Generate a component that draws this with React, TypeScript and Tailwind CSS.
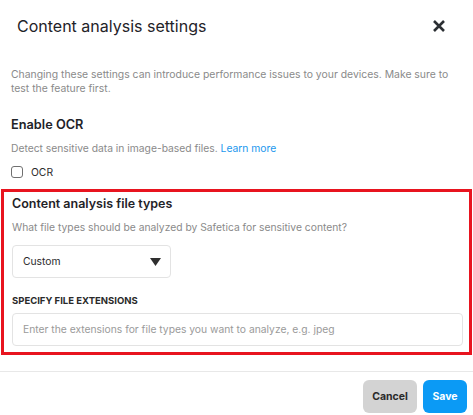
import React from "react";

export default function App() {
  return (
    <div className="w-[473px] h-[415px] bg-white overflow-hidden" style={{ fontFamily: "Inter, 'Noto Sans', sans-serif" }}>
      <div className="flex items-center justify-between h-[52px] pl-[17px] pr-[26px]">
        <h1 className="text-[16px] text-[#1f2328] font-normal leading-[24px]">Content analysis settings</h1>
        <svg width="14" height="14" viewBox="0 0 14 14" className="mr-[1px]">
          <path d="M2 2 L12 12 M12 2 L2 12" stroke="#2b2f33" strokeWidth="2.6" strokeLinecap="butt" />
        </svg>
      </div>
      <div className="px-[11px] pt-[16px]">
        <p className="text-[10.4px] leading-[14px] text-[#8a8a8a]">
          Changing these settings can introduce performance issues to your devices. Make sure to test the feature first.
        </p>
        <h2 className="mt-[20px] text-[12.75px] leading-[18px] font-semibold text-[#1f2328]">Enable OCR</h2>
        <p className="mt-[6px] text-[10.3px] leading-[16px] text-[#8a8a8a]">
          Detect sensitive data in image-based files. <span className="text-[#1a98ee]">Learn more</span>
        </p>
        <label className="mt-[8px] flex items-center gap-[8px]">
          <span className="w-[12px] h-[12px] rounded-[3px] border-[1.5px] border-[#707070] bg-white" />
          <span className="text-[10.3px] leading-[16px] text-[#2a2a2a]">OCR</span>
        </label>
      </div>
      <section className="mx-[1px] mt-[9px] h-[166px] border-[3px] border-[#e8141f] px-[8px] pt-[3px]">
        <h2 className="text-[12.5px] leading-[18px] font-semibold text-[#1f2328]">Content analysis file types</h2>
        <p className="mt-[6px] text-[10.3px] leading-[16px] text-[#8a8a8a]">
          What file types should be analyzed by Safetica for sensitive content?
        </p>
        <div className="mt-[10px] w-[159px] h-[33px] rounded-[4px] border border-[#e3e3e3] flex items-center justify-between pl-[10px] pr-[9px]">
          <span className="text-[10.3px] text-[#2a2a2a]">Custom</span>
          <svg width="11" height="8" viewBox="0 0 11 8">
            <path d="M0 0 L11 0 L5.5 8 Z" fill="#2f2f2f" />
          </svg>
        </div>
        <div className="mt-[16px] text-[9.5px] leading-[14px] font-bold text-[#2a2a2a]">SPECIFY FILE EXTENSIONS</div>
        <div className="mt-[5px] h-[33px] w-[451px] rounded-[4px] border border-[#e3e3e3] flex items-center pl-[10px]">
          <span className="text-[10.3px] text-[#9a9a9a]">Enter the extensions for file types you want to analyze, e.g. jpeg</span>
        </div>
      </section>
      <div className="mt-[16px] border-t border-[#e8e8e8]" />
      <div className="flex justify-end gap-[6px] pr-[6px] pt-[8px]">
        <button className="w-[54px] h-[33px] rounded-[6px] bg-[#d3d3d3] text-[10.5px] font-bold text-[#2a2a2a]">Cancel</button>
        <button className="w-[44px] h-[33px] rounded-[6px] bg-[#0b9af5] text-[10.5px] font-bold text-white">Save</button>
      </div>
    </div>
  );
}
